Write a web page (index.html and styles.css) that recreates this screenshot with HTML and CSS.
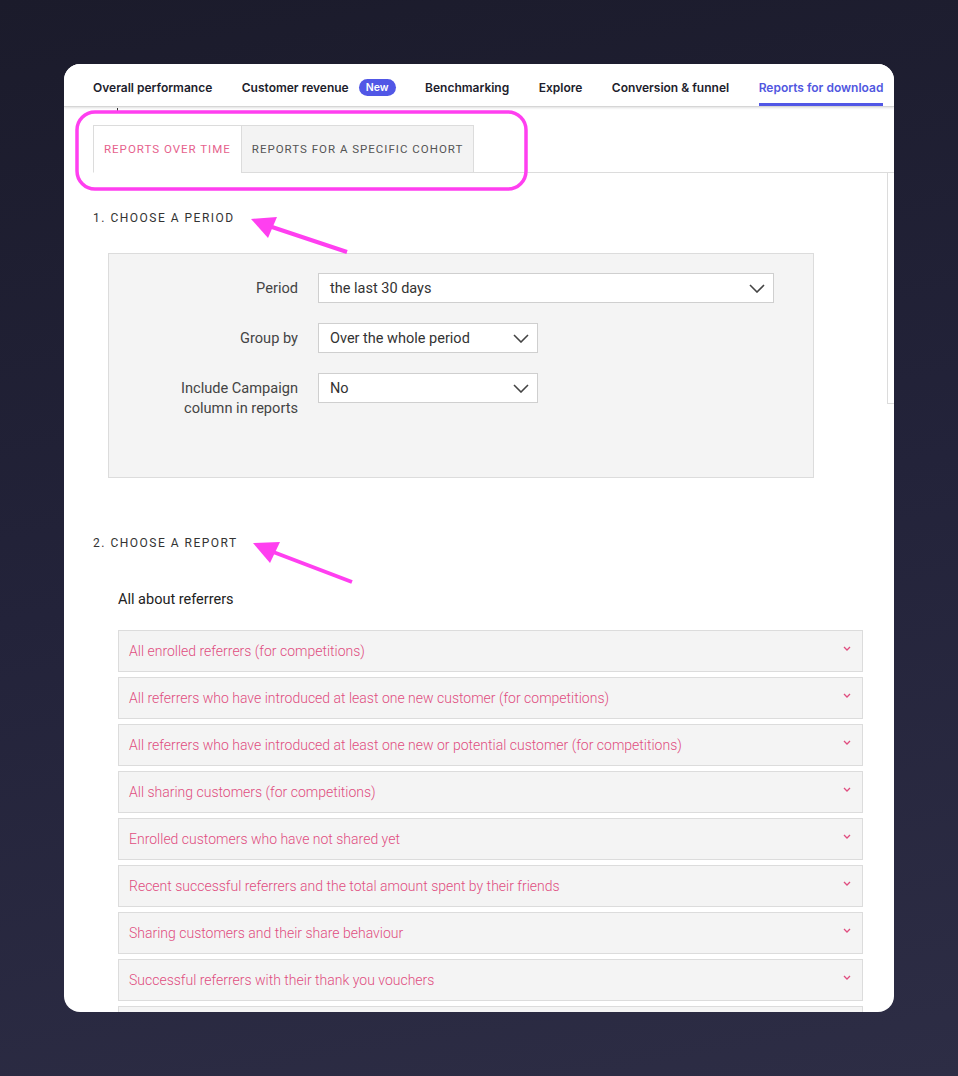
FILE: index.html
```html
<!DOCTYPE html>
<html>
<head>
<meta charset="utf-8">
<link rel="stylesheet" href="styles.css">
</head>
<body>
<div class="card">
  <nav class="nav">
    <a class="nav-item">Overall performance</a>
    <a class="nav-item">Customer revenue <span class="badge">New</span></a>
    <a class="nav-item">Benchmarking</a>
    <a class="nav-item">Explore</a>
    <a class="nav-item">Conversion &amp; funnel</a>
    <a class="nav-item active">Reports for download</a>
  </nav>
  <div class="clipped"><span class="tick"></span></div>
  <div class="tabs">
    <div class="tab active">REPORTS OVER TIME</div>
    <div class="tab">REPORTS FOR A SPECIFIC COHORT</div>
    <div class="tab-fill"></div>
  </div>
  <div class="content-row">
    <main class="main">
      <h2 class="step">1. CHOOSE A PERIOD</h2>
      <div class="form-box">
        <div class="form-row">
          <label class="label">Period</label>
          <div class="select wide"><span>the last 30 days</span><svg class="chev" viewBox="0 0 16 9"><path d="M1 1l7 7 7-7"/></svg></div>
        </div>
        <div class="form-row">
          <label class="label">Group by</label>
          <div class="select"><span>Over the whole period</span><svg class="chev" viewBox="0 0 16 9"><path d="M1 1l7 7 7-7"/></svg></div>
        </div>
        <div class="form-row">
          <label class="label narrow">Include Campaign column in reports</label>
          <div class="select"><span>No</span><svg class="chev" viewBox="0 0 16 9"><path d="M1 1l7 7 7-7"/></svg></div>
        </div>
      </div>
      <h2 class="step step2">2. CHOOSE A REPORT</h2>
      <h3 class="group-title">All about referrers</h3>
      <ul class="reports">
        <li class="report">All enrolled referrers (for competitions)<svg class="rchev" viewBox="0 0 8 5"><path d="M1 1l3 3 3-3"/></svg></li>
        <li class="report">All referrers who have introduced at least one new customer (for competitions)<svg class="rchev" viewBox="0 0 8 5"><path d="M1 1l3 3 3-3"/></svg></li>
        <li class="report">All referrers who have introduced at least one new or potential customer (for competitions)<svg class="rchev" viewBox="0 0 8 5"><path d="M1 1l3 3 3-3"/></svg></li>
        <li class="report">All sharing customers (for competitions)<svg class="rchev" viewBox="0 0 8 5"><path d="M1 1l3 3 3-3"/></svg></li>
        <li class="report">Enrolled customers who have not shared yet<svg class="rchev" viewBox="0 0 8 5"><path d="M1 1l3 3 3-3"/></svg></li>
        <li class="report">Recent successful referrers and the total amount spent by their friends<svg class="rchev" viewBox="0 0 8 5"><path d="M1 1l3 3 3-3"/></svg></li>
        <li class="report">Sharing customers and their share behaviour<svg class="rchev" viewBox="0 0 8 5"><path d="M1 1l3 3 3-3"/></svg></li>
        <li class="report">Successful referrers with their thank you vouchers<svg class="rchev" viewBox="0 0 8 5"><path d="M1 1l3 3 3-3"/></svg></li>
        <li class="report">&nbsp;</li>
      </ul>
    </main>
    <aside class="side"></aside>
  </div>
</div>
<svg class="annot" viewBox="0 0 958 1076" width="958" height="1076">
  <rect x="77" y="112" width="449" height="77" rx="18" ry="18" fill="none" stroke="#ff3ff0" stroke-width="3.5"/>
  <line x1="347" y1="252" x2="266" y2="225" stroke="#ff3ff0" stroke-width="4"/>
  <polygon points="251,219 277,217 268,238" fill="#ff3ff0"/>
  <line x1="352" y1="582" x2="268" y2="550" stroke="#ff3ff0" stroke-width="4"/>
  <polygon points="253,543 280,542 270,563" fill="#ff3ff0"/>
</svg>
</body>
</html>
```
FILE: styles.css
```css
html, body {
  margin: 0;
  padding: 0;
}
body {
  width: 958px;
  height: 1076px;
  overflow: hidden;
  background: linear-gradient(170deg, #1b1b2b 0%, #23233a 50%, #2d2d45 100%);
  font-family: Roboto, "Liberation Sans", sans-serif;
  position: relative;
}
.card {
  position: relative;
  margin: 64px 0 0 64px;
  width: 830px;
  height: 948px;
  background: #fff;
  border-radius: 16px;
  overflow: hidden;
}
.nav {
  display: flex;
  align-items: flex-end;
  gap: 29.5px;
  height: 42px;
  padding-left: 29px;
  border-bottom: 1px solid #d6d6d6;
  box-shadow: 0 1px 2px rgba(0,0,0,0.12);
  position: relative;
  z-index: 2;
  background: #fff;
}
.nav-item {
  font-family: Inter, "Noto Sans", sans-serif;
  font-weight: 600;
  font-size: 12px;
  color: #1d1d2c;
  height: 39px;
  display: flex;
  align-items: center;
  padding-top: 5px;
  box-sizing: border-box;
  border-bottom: 3px solid transparent;
  white-space: nowrap;
  letter-spacing: 0;
}
.nav-item.active {
  color: #5157e0;
  border-bottom-color: #5157e6;
}
.badge {
  display: inline-block;
  margin-left: 10px;
  background: #5157e6;
  color: #fff;
  font-size: 10.5px;
  font-weight: 600;
  line-height: 17px;
  height: 17px;
  padding: 0 7px;
  border-radius: 9px;
}
.clipped {
  height: 18px;
  position: relative;
}
.tick {
  position: absolute;
  left: 53px;
  top: 1px;
  width: 1px;
  height: 4px;
  background: #333;
}
.tabs {
  display: flex;
  padding-left: 29px;
  height: 48px;
}
.tab {
  font-size: 11.5px;
  letter-spacing: 1px;
  display: flex;
  align-items: center;
  padding: 0 10px;
  box-sizing: border-box;
  border: 1px solid #dcdcdc;
  background: #f3f3f3;
  color: #555;
  white-space: nowrap;
}
.tab.active {
  background: #fff;
  color: #e6628d;
  border-bottom-color: #fff;
  border-right: none;
}
.tab-fill {
  flex: 1;
  border-bottom: 1px solid #dcdcdc;
}
.content-row {
  display: flex;
}
.main {
  flex: 1;
  padding-left: 29px;
}
.side {
  width: 6px;
  height: 230px;
  border-left: 1px solid #dcdcdc;
  border-bottom: 1px solid #dcdcdc;
  background: #fff;
}
.step {
  margin: 0;
  font-size: 12px;
  font-weight: 400;
  letter-spacing: 1.5px;
  color: #333;
  line-height: 16px;
  padding-top: 37px;
}
.step2 {
  padding-top: 57px;
}
.form-box {
  margin: 27px 0 0 15px;
  width: 704px;
  background: #f4f4f4;
  border: 1px solid #dcdcdc;
  padding: 19px 0 59px;
  display: flex;
  flex-direction: column;
  gap: 20px;
}
.form-row {
  display: grid;
  grid-template-columns: 190px auto;
  column-gap: 19px;
  align-items: start;
}
.label {
  text-align: right;
  font-size: 14.6px;
  color: #444;
  line-height: 20px;
  padding-top: 5px;
  padding-right: 1px;
  justify-self: end;
}
.label.narrow {
  width: 125px;
}
.select {
  width: 220px;
  height: 30px;
  box-sizing: border-box;
  background: #fff;
  border: 1px solid #cfcfcf;
  display: flex;
  align-items: center;
  justify-content: space-between;
  padding: 0 8px 0 11px;
  font-size: 14.5px;
  color: #333;
}
.select.wide {
  width: 456px;
}
.chev {
  width: 16px;
  height: 9px;
  fill: none;
  stroke: #444;
  stroke-width: 1.6;
}
.group-title {
  margin: 0;
  padding: 34px 0 0 25px;
  font-size: 14.5px;
  font-weight: 400;
  color: #222;
  line-height: 30px;
}
.reports {
  list-style: none;
  margin: 15px 0 0 25px;
  padding: 0;
  width: 745px;
  display: flex;
  flex-direction: column;
  gap: 5px;
}
.report {
  height: 42px;
  box-sizing: border-box;
  border: 1px solid #dcdcdc;
  background: #f4f4f4;
  display: flex;
  align-items: center;
  justify-content: space-between;
  padding: 0 11px 0 10px;
  font-size: 14px;
  font-weight: 300;
  color: #e04d7f;
  position: relative;
}
.rchev {
  width: 8px;
  height: 5px;
  fill: none;
  stroke: #e04d7f;
  stroke-width: 1.3;
  align-self: flex-start;
  margin-top: 15px;
}
.annot {
  position: absolute;
  left: 0;
  top: 0;
  pointer-events: none;
}
```
